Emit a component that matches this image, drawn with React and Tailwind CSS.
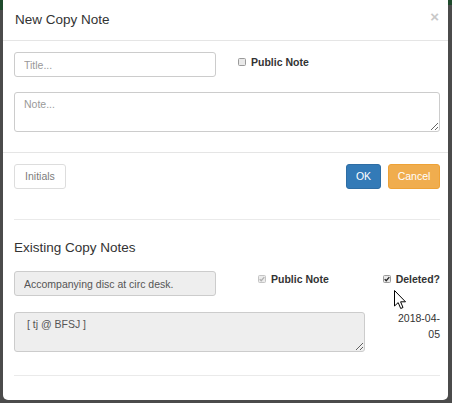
import React from 'react'

function Box({ checked, dim }) {
  return (
    <svg width="8" height="8" viewBox="0 0 8 8" className="shrink-0">
      <rect
        x="0.5"
        y="0.5"
        width="7"
        height="7"
        rx="1"
        fill={dim ? '#ececec' : '#e9e9e9'}
        stroke={dim ? '#c4c4c4' : '#9a9a9a'}
      />
      {checked && (
        <path
          d="M1.7 4.1 L3.2 5.7 L6.3 2.1"
          fill="none"
          stroke={dim ? '#b0b0b0' : '#222'}
          strokeWidth="1.3"
        />
      )}
    </svg>
  )
}

function Check({ checked, dim, children }) {
  return (
    <label className="flex items-start gap-[5px] text-[10.5px] leading-[15px] font-bold text-[#333]">
      <span className="mt-[3px]">
        <Box checked={checked} dim={dim} />
      </span>
      {children}
    </label>
  )
}

export default function App() {
  return (
    <div className="relative w-[452px] h-[403px] overflow-hidden bg-[#4b4b4b] font-['Liberation_Sans',Arial,sans-serif]">
      {/* bit of the page behind the backdrop */}
      <div className="absolute left-0 top-0 w-[3px] h-[10px] bg-[#1f4a2c]" />
      <div className="absolute right-0 top-0 w-[4px] h-[5px] bg-[#1f4a2c]" />

      <div className="ml-[3px] w-[445px] h-[400px] bg-white rounded-b-[5px] flex flex-col">
        {/* header */}
        <div className="h-[41px] border-b border-[#e5e5e5] pl-[12px] pr-[9px] pt-[10px] flex justify-between items-start">
          <h4 className="text-[13.5px] leading-[19px] text-[#333]">New Copy Note</h4>
          <span className="text-[15px] leading-[15px] font-bold text-[#c8c8c8] mt-[-1px]">×</span>
        </div>

        {/* body */}
        <div className="border-b border-[#e5e5e5] pl-[11px] pr-[8px] pt-[11px] pb-[20px]">
          <div className="flex items-start">
            <input
              readOnly
              placeholder="Title..."
              className="w-[202px] h-[25px] border border-[#ccc] rounded-[3px] px-[9px] text-[10.5px] text-[#555] placeholder:text-[#999] outline-none"
            />
            <div className="ml-[22px] pt-[3px]">
              <Check>Public Note</Check>
            </div>
          </div>
          <textarea
            readOnly
            placeholder="Note..."
            className="block mt-[15px] w-[426px] h-[40px] border border-[#ccc] rounded-[3px] px-[9px] py-[4px] text-[10.5px] leading-[15px] text-[#555] placeholder:text-[#999] outline-none"
          />
        </div>

        {/* footer + existing notes */}
        <div className="pl-[11px] pr-[8px] pt-[11px]">
          <div className="flex items-center justify-between">
            <button className="w-[52px] h-[25px] border border-[#ccc] rounded-[3px] text-[10.5px] text-[#333] opacity-65">
              Initials
            </button>
            <div className="flex gap-[7px]">
              <button className="w-[35px] h-[25px] bg-[#337ab7] border border-[#2e6da4] rounded-[3px] text-[10.5px] text-white">
                OK
              </button>
              <button className="w-[52px] h-[25px] bg-[#f0ad4e] border border-[#eea236] rounded-[3px] text-[10.5px] text-white">
                Cancel
              </button>
            </div>
          </div>

          <div className="mt-[30px] border-t border-[#eaeaea]" />

          <h4 className="mt-[18px] text-[13.5px] leading-[19px] text-[#333]">Existing Copy Notes</h4>

          <div className="mt-[14px] flex items-start">
            <input
              readOnly
              value="Accompanying disc at circ desk."
              className="w-[202px] h-[25px] border border-[#ccc] rounded-[3px] px-[9px] bg-[#eee] text-[10.5px] text-[#555] outline-none"
            />
            <div className="ml-[42px] pt-[1px]">
              <Check checked dim>Public Note</Check>
            </div>
            <div className="ml-auto pt-[1px]">
              <Check checked>Deleted?</Check>
            </div>
          </div>

          <div className="mt-[14px] flex items-start justify-between">
            <textarea
              readOnly
              value=" [ tj @ BFSJ ]"
              className="block mt-[2px] w-[351px] h-[40px] border border-[#ccc] rounded-[3px] px-[9px] py-[4px] bg-[#eee] text-[10.5px] leading-[15px] text-[#555] outline-none"
            />
            <div className="text-right text-[10.5px] leading-[16px] text-[#333]">
              2018-04-
              <br />
              05
            </div>
          </div>

          <div className="mt-[23px] border-t border-[#eaeaea]" />
        </div>
      </div>

      {/* mouse pointer */}
      <svg
        className="absolute left-[394px] top-[290px]"
        width="13"
        height="20"
        viewBox="0 0 13 20"
      >
        <path
          d="M0.5 0.5 L0.5 16 L4.2 12.6 L6.7 18.5 L9 17.5 L6.6 11.8 L11.5 11.8 Z"
          fill="#fff"
          stroke="#000"
          strokeWidth="1"
          strokeLinejoin="round"
        />
      </svg>
    </div>
  )
}
